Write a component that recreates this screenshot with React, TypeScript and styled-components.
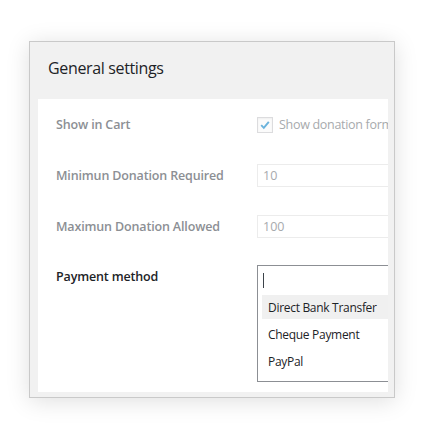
import React from 'react'
import styled, { createGlobalStyle } from 'styled-components'

const GlobalStyle = createGlobalStyle`
  html, body {
    margin: 0;
    padding: 0;
    background: #fff;
  }
  body {
    font-family: 'Open Sans', 'Noto Sans', sans-serif;
  }
`;

const Page = styled.div`
  padding: 41px 0 0 29px;
  width: 422px;
  height: 446px;
  box-sizing: border-box;
`;

const Card = styled.div`
  width: 366px;
  height: 357px;
  box-sizing: border-box;
  background: #f1f1f1;
  border: 1px solid #c9c9c9;
  box-shadow: 0 3px 22px rgba(0, 0, 0, 0.13);
  display: flex;
  flex-direction: column;
`;

const Header = styled.div`
  height: 57px;
  box-sizing: border-box;
  padding: 15px 0 0 18px;

  & h2 {
    margin: 0;
    font-size: 16px;
    line-height: 22px;
    font-weight: 400;
    letter-spacing: -0.35px;
    color: #1d2327;
  }
`;

const Panel = styled.div`
  margin: 0 6px 5px 8px;
  width: 350px;
  flex: 1;
  background: #fff;
  overflow: hidden;
`;

const Row = styled.div<{ $top?: boolean }>`
  display: flex;
  align-items: ${p => (p.$top ? 'flex-start' : 'center')};
  height: ${p => (p.$top ? 'auto' : '51px')};
  padding-top: ${p => (p.$top ? '13px' : '0')};
  padding-left: 18px;
`;

const Label = styled.div<{ $dark?: boolean }>`
  width: 201px;
  flex-shrink: 0;
  font-size: 12.5px;
  letter-spacing: -0.15px;
  font-weight: 600;
  line-height: 20px;
  color: ${p => (p.$dark ? '#1d2327' : '#8c8f94')};
  margin-top: ${p => (p.$dark ? '2px' : '0')};
`;

const CheckWrap = styled.label`
  display: flex;
  align-items: center;
  gap: 6px;
  white-space: nowrap;
  font-size: 12.5px;
  letter-spacing: -0.3px;
  color: #a7aaad;
`;

const CheckBox = styled.span`
  width: 14px;
  height: 14px;
  border: 1px solid #dcdcde;
  background: #fbfbfb;
  display: flex;
  align-items: center;
  justify-content: center;
  box-shadow: inset 0 1px 2px rgba(0, 0, 0, 0.05);
`;

const TextInput = styled.div`
  width: 200px;
  height: 23px;
  box-sizing: border-box;
  border: 1px solid #ececec;
  padding-left: 5px;
  display: flex;
  align-items: center;
  font-size: 12.5px;
  color: #a7aaad;
  flex-shrink: 0;
`;

const Select = styled.div`
  width: 200px;
  height: 117px;
  box-sizing: border-box;
  border: 1px solid #8c8f94;
  border-right: none;
  flex-shrink: 0;
  padding: 0 0 0 4px;
  background: #fff;
`;

const SearchLine = styled.div`
  height: 29px;
  display: flex;
  align-items: center;
  padding-left: 1px;

  & span {
    width: 1px;
    height: 15px;
    background: #3c434a;
  }
`;

const Option = styled.div<{ $active?: boolean }>`
  height: 24px;
  margin-bottom: 3px;
  display: flex;
  align-items: center;
  padding-left: 6px;
  font-size: 12px;
  letter-spacing: -0.3px;
  color: #1d2327;
  background: ${p => (p.$active ? '#f0f0f0' : 'transparent')};
  white-space: nowrap;
`;

const methods = ['Direct Bank Transfer', 'Cheque Payment', 'PayPal'];

export default function App() {
  return (
    <>
      <GlobalStyle />
      <Page>
        <Card>
          <Header>
            <h2>General settings</h2>
          </Header>
          <Panel>
            <Row>
              <Label>Show in Cart</Label>
              <CheckWrap>
                <CheckBox>
                  <svg width="12" height="12" viewBox="0 0 12 12">
                    <path d="M2.2 6.2 L4.8 8.8 L9.8 2.8" fill="none" stroke="#6bb3dc" strokeWidth="1.9" />
                  </svg>
                </CheckBox>
                Show donation form
              </CheckWrap>
            </Row>
            <Row>
              <Label>Minimun Donation Required</Label>
              <TextInput>10</TextInput>
            </Row>
            <Row>
              <Label>Maximun Donation Allowed</Label>
              <TextInput>100</TextInput>
            </Row>
            <Row $top>
              <Label $dark>Payment method</Label>
              <Select>
                <SearchLine><span /></SearchLine>
                {methods.map((m, i) => (
                  <Option key={m} $active={i === 0}>{m}</Option>
                ))}
              </Select>
            </Row>
          </Panel>
        </Card>
      </Page>
    </>
  )
}
